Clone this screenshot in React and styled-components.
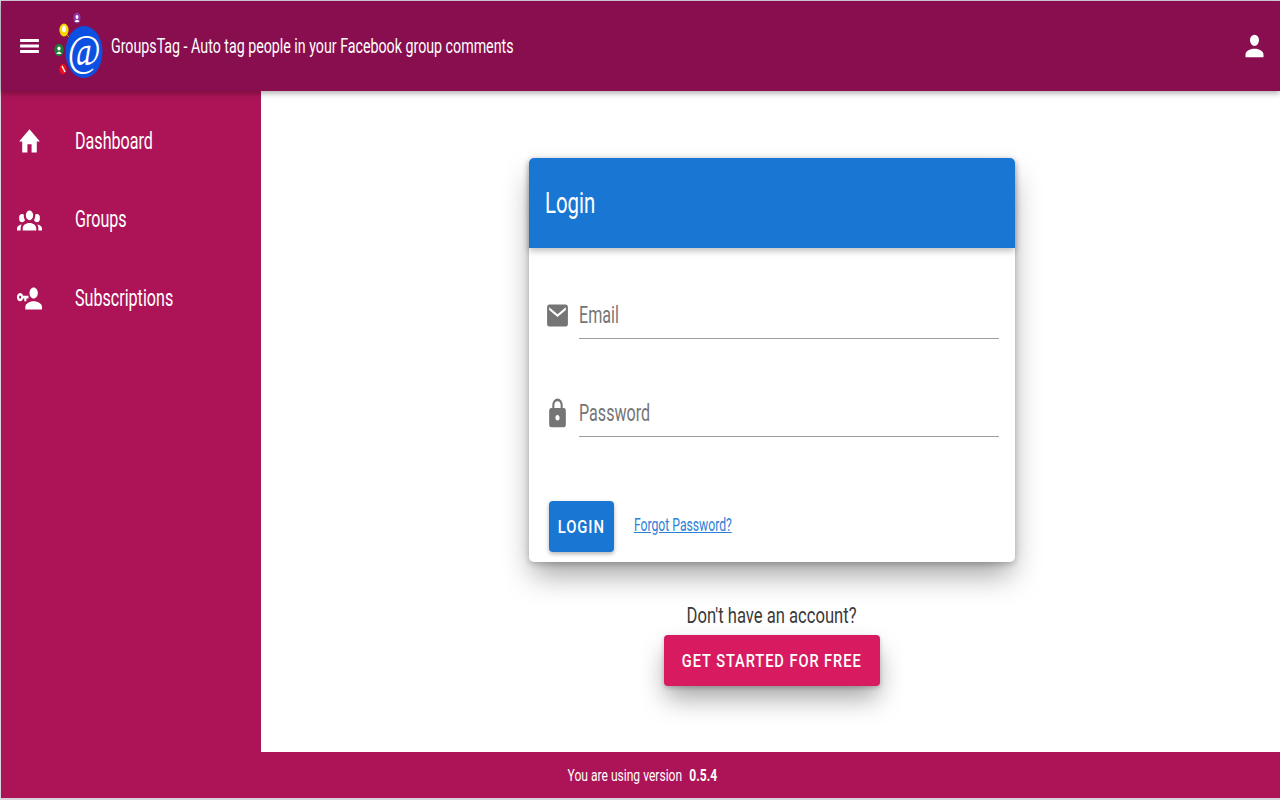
import styled, { createGlobalStyle } from "styled-components";

const GlobalStyle = createGlobalStyle`
  html, body, #root {
    margin: 0;
    height: 100%;
  }
  body {
    background: #d9d3de;
    font-family: Roboto, "Liberation Sans", sans-serif;
    overflow: hidden;
  }
`;

const Page = styled.div`
  height: 800px;
  display: flex;
  flex-direction: column;
  padding: 1px 0 2px 1px;
  box-sizing: border-box;
`;

const Header = styled.header`
  height: 90px;
  flex: none;
  display: flex;
  align-items: center;
  padding: 0 12px 0 16px;
  background: #880e4f;
  box-shadow: 0 2px 6px rgba(0, 0, 0, 0.35);
  position: relative;
  z-index: 2;
`;

const Body = styled.div`
  flex: 1;
  display: flex;
  min-height: 0;
`;

const Sidebar = styled.nav`
  width: 260px;
  flex: none;
  background: #ad1457;
  padding-top: 11px;
`;

const NavItem = styled.div`
  height: 78.5px;
  display: flex;
  align-items: center;
  padding-left: 16px;
  color: #fff;
`;

const NavIcon = styled.svg`
  width: 25px;
  height: 33px;
  flex: none;
  margin-right: 32.5px;
  fill: #fff;
`;

// the screenshot is squeezed sideways, so the text gets the same squeeze
const Squeezed = styled.span`
  display: inline-block;
  white-space: nowrap;
  transform: scaleX(${(p) => p.$x || 0.7});
  transform-origin: ${(p) => p.$origin || "left center"};
`;

const NavLabel = styled(Squeezed)`
  font-size: 23px;
  color: #fff;
`;

const MenuIcon = styled.svg`
  width: 25px;
  height: 28px;
  flex: none;
  margin-right: 9px;
  fill: #fff;
`;

const Logo = styled.svg`
  width: 56px;
  height: 74px;
  flex: none;
  margin-right: 4px;
`;

const AppTitle = styled(Squeezed)`
  flex: 1;
  font-size: 20.5px;
  color: #fff;
`;

const UserIcon = styled.svg`
  width: 27px;
  height: 34px;
  flex: none;
  fill: #fff;
`;

const Main = styled.main`
  flex: 1;
  background: #fff;
  display: flex;
  flex-direction: column;
  align-items: center;
  padding: 67px 0 0 2px;
`;

const Card = styled.section`
  width: 486px;
  height: 404px;
  border-radius: 5px;
  background: #fff;
  box-shadow: 0 16px 30px -4px rgba(0, 0, 0, 0.38), 0 2px 6px rgba(0, 0, 0, 0.22);
  display: flex;
  flex-direction: column;
`;

const CardHeader = styled.div`
  height: 90px;
  flex: none;
  display: flex;
  align-items: center;
  padding: 0 0 2px 16px;
  box-sizing: border-box;
  background: #1976d2;
  border-radius: 5px 5px 0 0;
  box-shadow: 0 3px 6px rgba(0, 0, 0, 0.25);
`;

const CardTitle = styled(Squeezed)`
  font-size: 30px;
  color: #fff;
`;

const Fields = styled.div`
  padding: 51px 16px 0 16px;
  display: flex;
  flex-direction: column;
  gap: 58px;
`;

const Field = styled.div`
  display: flex;
  align-items: center;
  gap: 9px;
`;

const FieldIcon = styled.svg`
  width: 25px;
  height: 33px;
  flex: none;
  margin-top: -8px;
  fill: #757575;
`;

const FieldLine = styled.div`
  flex: 1;
  height: 36px;
  padding-top: 3px;
  display: flex;
  align-items: flex-start;
  border-bottom: 1px solid #9e9e9e;
`;

const Placeholder = styled(Squeezed)`
  font-size: 23px;
  color: #757575;
`;

const Actions = styled.div`
  margin-top: auto;
  padding: 0 0 10px 20px;
  display: flex;
  align-items: center;
  gap: 20px;
`;

const Button = styled.button`
  height: 51px;
  flex: none;
  border: 0;
  padding: 0;
  border-radius: 4px;
  display: flex;
  align-items: center;
  justify-content: center;
  color: #fff;
  background: ${(p) => p.$color};
  width: ${(p) => p.$width};
  font-family: inherit;
  font-weight: 500;
  font-size: 19px;
  letter-spacing: 1.2px;
  box-shadow: ${(p) => p.$shadow};
`;

const ForgotLink = styled.a`
  color: #2a7fd6;
  font-size: 17.5px;
  text-decoration: underline;
  display: inline-block;
  white-space: nowrap;
  margin-top: -3px;
  transform: scaleX(0.695);
  transform-origin: left center;
`;

const SignUp = styled.div`
  margin: 35px 0 0 1px;
  display: flex;
  flex-direction: column;
  align-items: center;
`;

const SignUpText = styled(Squeezed)`
  font-size: 22px;
  line-height: 38px;
  color: #3a3a3a;
`;

const Footer = styled.footer`
  height: 46px;
  flex: none;
  display: flex;
  align-items: center;
  justify-content: center;
  padding-left: 4px;
  background: #ad1457;
  color: #fff;
`;

const FooterText = styled(Squeezed)`
  font-size: 17px;

  b {
    margin-left: 6px;
    font-weight: 700;
  }
`;

const Glyph = ({ as: Comp, d }) => (
  <Comp viewBox="0 0 24 24" preserveAspectRatio="none">
    <path d={d} />
  </Comp>
);

const paths = {
  menu: "M3 6h18v2.6H3z M3 10.7h18v2.6H3z M3 15.4h18v2.6H3z",
  user: "M12,4A4,4 0 0,1 16,8A4,4 0 0,1 12,12A4,4 0 0,1 8,8A4,4 0 0,1 12,4M12,14C16.42,14 20,15.79 20,18V20H4V18C4,15.79 7.58,14 12,14Z",
  home: "M10,20V14H14V20H19V12H22L12,3L2,12H5V20H10Z",
  groups:
    "M12,5.5A3.5,3.5 0 0,1 15.5,9A3.5,3.5 0 0,1 12,12.5A3.5,3.5 0 0,1 8.5,9A3.5,3.5 0 0,1 12,5.5M5,8C5.56,8 6.08,8.15 6.53,8.42C6.38,9.85 6.8,11.27 7.66,12.38C7.16,13.34 6.16,14 5,14A3,3 0 0,1 2,11A3,3 0 0,1 5,8M19,8A3,3 0 0,1 22,11A3,3 0 0,1 19,14C17.84,14 16.84,13.34 16.34,12.38C17.2,11.27 17.62,9.85 17.47,8.42C17.92,8.15 18.44,8 19,8M5.5,18.25C5.5,16.18 8.41,14.5 12,14.5C15.59,14.5 18.5,16.18 18.5,18.25V20H5.5V18.25M0,20V18.5C0,17.11 1.89,15.94 4.45,15.6C3.86,16.28 3.5,17.22 3.5,18.25V20H0M24,20H20.5V18.25C20.5,17.22 20.14,16.28 19.55,15.6C22.11,15.94 24,17.11 24,18.5V20Z",
  accountKey:
    "M11 10V12H9V14H7V12H5.8C5.4 13.2 4.3 14 3 14C1.3 14 0 12.7 0 11S1.3 8 3 8C4.3 8 5.4 8.8 5.8 10H11M3 10C2.4 10 2 10.4 2 11S2.4 12 3 12 4 11.6 4 11 3.6 10 3 10M16 14C18.7 14 24 15.3 24 18V20H8V18C8 15.3 13.3 14 16 14M16 12C13.8 12 12 10.2 12 8S13.8 4 16 4 20 5.8 20 8 18.2 12 16 12Z",
  email:
    "M20,8L12,13L4,8V6L12,11L20,6M20,4H4C2.89,4 2,4.89 2,6V18A2,2 0 0,0 4,20H20A2,2 0 0,0 22,18V6C22,4.89 21.1,4 20,4Z",
  lock: "M12,17A2,2 0 0,0 14,15C14,13.89 13.1,13 12,13A2,2 0 0,0 10,15A2,2 0 0,0 12,17M18,8A2,2 0 0,1 20,10V20A2,2 0 0,1 18,22H6A2,2 0 0,1 4,20V10C4,8.89 4.9,8 6,8H7V6A5,5 0 0,1 12,1A5,5 0 0,1 17,6V8H18M12,3A3,3 0 0,0 9,6V8H15V6A3,3 0 0,0 12,3Z",
};

const LogoMark = () => (
  <Logo viewBox="0 0 56 74">
    <line x1="14" y1="24" x2="22" y2="32" stroke="#b59a3a" strokeWidth="1" />
    <ellipse cx="33" cy="43" rx="18.5" ry="26" fill="#0b50e0" />
    <text
      x="33"
      y="56"
      textAnchor="middle"
      fill="#fff"
      fontFamily='"Liberation Serif", serif'
      fontStyle="italic"
      fontSize="44"
      textLength="33"
      lengthAdjust="spacingAndGlyphs"
    >
      @
    </text>
    <ellipse cx="26" cy="9" rx="3.6" ry="5.5" fill="#8e3aa5" />
    <ellipse cx="26" cy="8" rx="1.4" ry="1.9" fill="#fff" />
    <path d="M23.5 13 Q26 8.5 28.5 13Z" fill="#fff" />
    <ellipse cx="13" cy="21" rx="4.6" ry="6.5" fill="#f4d800" />
    <ellipse cx="13" cy="20" rx="2" ry="3.2" fill="#fff" />
    <ellipse cx="8" cy="41" rx="4.6" ry="6.2" fill="#1f7a35" />
    <ellipse cx="8" cy="39.5" rx="1.6" ry="2" fill="#fff" />
    <path d="M5.2 45 Q8 40 10.8 45Z" fill="#fff" />
    <ellipse cx="12" cy="60" rx="3.6" ry="5.2" fill="#e5141e" />
    <path d="M11 57 L14 63" stroke="#fff" strokeWidth="1.4" />
  </Logo>
);

const navItems = [
  { label: "Dashboard", icon: paths.home },
  { label: "Groups", icon: paths.groups },
  { label: "Subscriptions", icon: paths.accountKey },
];

export default function App() {
  return (
    <Page>
      <GlobalStyle />
      <Header>
        <Glyph as={MenuIcon} d={paths.menu} />
        <LogoMark />
        <AppTitle $x={0.694}>GroupsTag - Auto tag people in your Facebook group comments</AppTitle>
        <Glyph as={UserIcon} d={paths.user} />
      </Header>
      <Body>
        <Sidebar>
          {navItems.map((item) => (
            <NavItem key={item.label}>
              <Glyph as={NavIcon} d={item.icon} />
              <NavLabel>{item.label}</NavLabel>
            </NavItem>
          ))}
        </Sidebar>
        <Main>
          <Card>
            <CardHeader>
              <CardTitle $x={0.68}>Login</CardTitle>
            </CardHeader>
            <Fields>
              <Field>
                <Glyph as={FieldIcon} d={paths.email} />
                <FieldLine>
                  <Placeholder>Email</Placeholder>
                </FieldLine>
              </Field>
              <Field>
                <Glyph as={FieldIcon} d={paths.lock} />
                <FieldLine>
                  <Placeholder>Password</Placeholder>
                </FieldLine>
              </Field>
            </Fields>
            <Actions>
              <Button $color="#1976d2" $width="65px" $shadow="0 2px 4px rgba(0,0,0,0.3)">
                <Squeezed $x={0.78} $origin="center">LOGIN</Squeezed>
              </Button>
              <ForgotLink href="#">Forgot Password?</ForgotLink>
            </Actions>
          </Card>
          <SignUp>
            <SignUpText $x={0.755} $origin="center">Don't have an account?</SignUpText>
            <Button
              $color="#d81b60"
              $width="216px"
              $shadow="0 14px 26px -2px rgba(0,0,0,0.36), 0 2px 4px rgba(0,0,0,0.2)"
            >
              <Squeezed $x={0.77} $origin="center">GET STARTED FOR FREE</Squeezed>
            </Button>
          </SignUp>
        </Main>
      </Body>
      <Footer>
        <FooterText $x={0.71} $origin="center">
          You are using version <b>0.5.4</b>
        </FooterText>
      </Footer>
    </Page>
  );
}
